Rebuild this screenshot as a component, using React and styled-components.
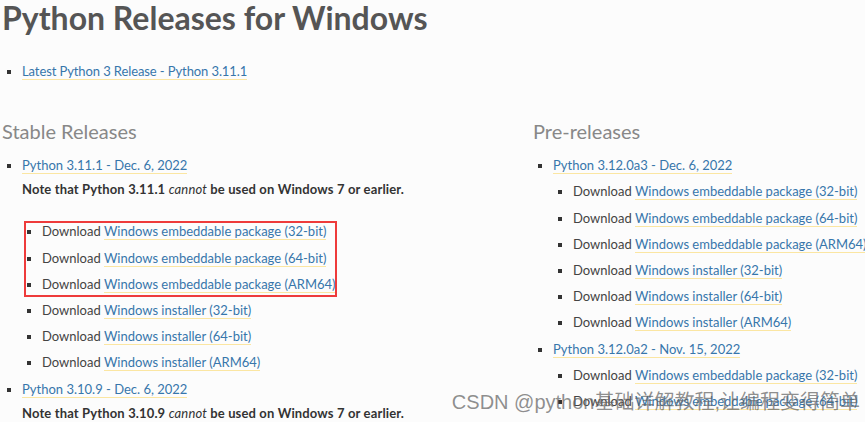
import React from 'react';
import styled, { createGlobalStyle } from 'styled-components';

const GlobalStyle = createGlobalStyle`
  html, body {
    margin: 0;
    padding: 0;
    background: #fcfcfc;
  }
  body {
    font-family: Lato, "Noto Sans", sans-serif;
  }
`;

const stable = {
  title: 'Python 3.11.1 - Dec. 6, 2022',
  note: '3.11.1',
  marked: ['Windows embeddable package (32-bit)', 'Windows embeddable package (64-bit)', 'Windows embeddable package (ARM64)'],
  rest: ['Windows installer (32-bit)', 'Windows installer (64-bit)', 'Windows installer (ARM64)'],
};

const preReleases = [
  {
    title: 'Python 3.12.0a3 - Dec. 6, 2022',
    files: [
      'Windows embeddable package (32-bit)',
      'Windows embeddable package (64-bit)',
      'Windows embeddable package (ARM64)',
      'Windows installer (32-bit)',
      'Windows installer (64-bit)',
      'Windows installer (ARM64)',
    ],
  },
  {
    title: 'Python 3.12.0a2 - Nov. 15, 2022',
    files: ['Windows embeddable package (32-bit)', 'Windows embeddable package (64-bit)'],
  },
];

function Note({ version }) {
  return (
    <StNote>
      Note that Python {version} <em>cannot</em> be used on Windows 7 or earlier.
    </StNote>
  );
}

function Downloads({ files, marked }) {
  return (
    <StDownloadList $marked={marked}>
      {files.map(f => (
        <StItem key={f}>
          Download <StLink href="#">{f}</StLink>
        </StItem>
      ))}
    </StDownloadList>
  );
}

export default function App() {
  return (
    <>
      <GlobalStyle />
      <StPage>
        <StTitle>Python Releases for Windows</StTitle>
        <StTopList>
          <StItem>
            <StLink href="#">Latest Python 3 Release - Python 3.11.1</StLink>
          </StItem>
        </StTopList>

        <StColumns>
          <section>
            <StHeading>Stable Releases</StHeading>
            <StReleaseList>
              <StItem>
                <StLink href="#">{stable.title}</StLink>
                <Note version={stable.note} />
                <Downloads files={stable.marked} marked />
                <Downloads files={stable.rest} />
              </StItem>
              <StItem>
                <StLink href="#">Python 3.10.9 - Dec. 6, 2022</StLink>
                <Note version="3.10.9" />
              </StItem>
            </StReleaseList>
          </section>

          <section>
            <StHeading>Pre-releases</StHeading>
            <StReleaseList>
              {preReleases.map(r => (
                <StItem key={r.title}>
                  <StLink href="#">{r.title}</StLink>
                  <Downloads files={r.files} />
                </StItem>
              ))}
            </StReleaseList>
          </section>
        </StColumns>

        <StWatermark>CSDN @python基础详解教程,让编程变得简单</StWatermark>
      </StPage>
    </>
  );
}

const StPage = styled.div`
  position: relative;
  width: 865px;
  height: 422px;
  overflow: hidden;
  padding-left: 2px;
  box-sizing: border-box;
  color: #444;
  font-size: 13px;
`;

const StTitle = styled.h1`
  margin: 0;
  font-size: 32px;
  line-height: 36px;
  font-weight: 700;
  letter-spacing: 0;
  color: #555;
`;

const StTopList = styled.ul`
  margin: 22px 0 0;
  padding-left: 20px;
  list-style: square;
  li {
    letter-spacing: -0.1px;
  }
`;

const StColumns = styled.div`
  display: grid;
  grid-template-columns: 531px 1fr;
  margin-top: 32px;
`;

const StHeading = styled.h2`
  margin: 0 0 6px;
  font-size: 20px;
  line-height: 30px;
  font-weight: 400;
  color: #888;
`;

const StReleaseList = styled.ul`
  margin: 0;
  padding-left: 20px;
  list-style: square;
`;

const StItem = styled.li`
  line-height: 26.2px;
  white-space: nowrap;
  &::marker {
    color: #333;
  }
`;

const StLink = styled.a`
  color: #3776ab;
  text-decoration: none;
  border-bottom: 1px solid #fbe6a2;
`;

const StNote = styled.p`
  margin: 0 0 18px;
  line-height: 22px;
  font-weight: 700;
  letter-spacing: 0.14px;
  color: #333;
  em {
    font-weight: 400;
  }
`;

const StDownloadList = styled.ul`
  position: relative;
  margin: 0;
  padding-left: 20px;
  list-style: square;

  ${p =>
    p.$marked &&
    `
    &::after {
      content: '';
      position: absolute;
      top: 3px;
      left: 2px;
      width: 313px;
      bottom: 0;
      border: 2px solid #ee3b3b;
      box-sizing: border-box;
      pointer-events: none;
    }
  `}
`;

const StWatermark = styled.div`
  position: absolute;
  right: 5px;
  bottom: 8px;
  font-family: "Liberation Sans", "Noto Sans CJK SC", sans-serif;
  font-size: 20px;
  line-height: 24px;
  color: rgba(100, 100, 100, 0.72);
  white-space: nowrap;
  pointer-events: none;
`;
